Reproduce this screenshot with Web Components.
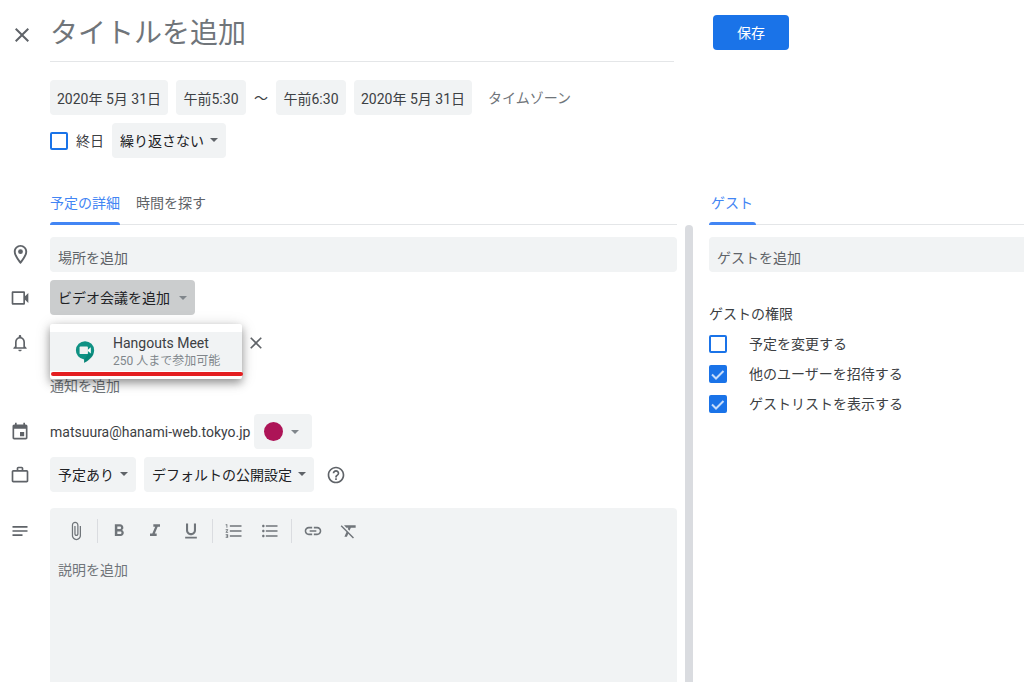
<!DOCTYPE html>
<html lang="ja">
<head>
<meta charset="utf-8">
<meta name="viewport" content="width=device-width, initial-scale=1">
<title>予定を作成</title>
<style>
  html, body { margin: 0; }
  body {
    background: #fff;
    color: #3c4043;
    font: 14px/20px Roboto, "Noto Sans CJK JP", sans-serif;
    --field: #f1f3f4;
    --line: #e4e6e8;
    --muted: #5f6368;
    --blue: #1a73e8;
    --control: 35px;
  }
</style>
</head>
<body>
<event-editor></event-editor>
<script>
const ICONS = {
  close: '<path d="M19 6.41 17.59 5 12 10.59 6.41 5 5 6.41 10.59 12 5 17.59 6.41 19 12 13.41 17.59 19 19 17.59 13.41 12z"/>',
  place: '<path d="M12 2C8.13 2 5 5.13 5 9c0 5.25 7 13 7 13s7-7.75 7-13c0-3.87-3.13-7-7-7zM7 9c0-2.76 2.24-5 5-5s5 2.24 5 5c0 2.88-2.88 7.19-5 9.88C9.92 16.21 7 11.85 7 9z"/><circle cx="12" cy="9" r="2.5"/>',
  video: '<path fill-rule="evenodd" d="M3.5 4h13c.83 0 1.500.67 1.500 1.500V10l4-4v12l-4-4v4.500c0 .83-.67 1.500-1.500 1.500h-13C2.670 20 2 19.330 2 18.500v-13C2 4.670 2.670 4 3.500 4zM4 6v12h12V6z"/>',
  bell: '<path d="M12 22c1.100 0 2-.9 2-2h-4c0 1.100.9 2 2 2zm6-6v-5c0-3.070-1.630-5.640-4.500-6.320V4c0-.83-.67-1.500-1.500-1.500s-1.500.67-1.500 1.500v.68C7.640 5.360 6 7.920 6 11v5l-2 2v1h16v-1l-2-2zm-2 1H8v-6c0-2.480 1.510-4.500 4-4.500s4 2.020 4 4.500v6z"/>',
  event: '<path d="M17 12h-5v5h5v-5zM16 1v2H8V1H6v2H5c-1.110 0-1.990.9-1.990 2L3 19c0 1.100.89 2 2 2h14c1.100 0 2-.9 2-2V5c0-1.100-.9-2-2-2h-1V1h-2zm3 18H5V8h14v11z"/>',
  work: '<path fill-rule="evenodd" d="M14 6V4h-4v2h4zM4 8v11h16V8H4zm16-2c1.110 0 2 .89 2 2v11c0 1.110-.89 2-2 2H4c-1.110 0-2-.89-2-2l.01-11c0-1.110.88-2 1.990-2h4V4c0-1.110.89-2 2-2h4c1.110 0 2 .89 2 2v2h4z"/>',
  notes: '<path d="M3 18h12v-2H3v2zM3 6v2h18V6H3zm0 7h18v-2H3v2z"/>',
  help: '<path d="M11 18h2v-2h-2v2zm1-16C6.480 2 2 6.480 2 12s4.480 10 10 10 10-4.480 10-10S17.520 2 12 2zm0 18c-4.410 0-8-3.590-8-8s3.590-8 8-8 8 3.590 8 8-3.590 8-8 8zm0-14c-2.210 0-4 1.790-4 4h2c0-1.100.9-2 2-2s2 .9 2 2c0 2-3 1.750-3 5h2c0-2.250 3-2.500 3-5 0-2.210-1.790-4-4-4z"/>',
  attach: '<path d="M16.500 6v11.500c0 2.210-1.790 4-4 4s-4-1.790-4-4V5c0-1.380 1.120-2.500 2.500-2.500s2.500 1.120 2.500 2.500v10.500c0 .55-.45 1-1 1s-1-.45-1-1V6H10v9.500c0 1.380 1.120 2.500 2.500 2.500s2.500-1.120 2.500-2.500V5c0-2.210-1.790-4-4-4S7 2.790 7 5v12.500c0 3.040 2.460 5.500 5.500 5.500s5.500-2.460 5.500-5.500V6h-1.500z"/>',
  bold: '<path d="M15.600 10.790c.97-.67 1.650-1.770 1.650-2.790 0-2.260-1.750-4-4-4H7v14h7.040c2.090 0 3.710-1.700 3.710-3.790 0-1.520-.86-2.820-2.150-3.420zM10 6.500h3c.83 0 1.500.67 1.500 1.500s-.67 1.500-1.500 1.500h-3v-3zm3.500 9H10v-3h3.500c.83 0 1.500.67 1.500 1.500s-.67 1.500-1.500 1.500z"/>',
  italic: '<path d="M10 4v3h2.210l-3.420 8H6v3h8v-3h-2.210l3.420-8H18V4z"/>',
  underline: '<path d="M12 17c3.310 0 6-2.690 6-6V3h-2.500v8c0 1.930-1.570 3.500-3.500 3.500S8.500 12.930 8.500 11V3H6v8c0 3.310 2.690 6 6 6zm-7 2v2h14v-2H5z"/>',
  numbered: '<path d="M2 17h2v.5H3v1h1v.5H2v1h3v-4H2v1zm1-9h1V4H2v1h1v3zm-1 3h1.800L2 13.100v.9h3v-1H3.200L5 10.900V10H2v1zm5-6v2h14V5H7zm0 14h14v-2H7v2zm0-6h14v-2H7v2z"/>',
  bulleted: '<path d="M4 10.500c-.83 0-1.500.67-1.500 1.500s.67 1.500 1.500 1.500 1.500-.67 1.500-1.500-.67-1.500-1.500-1.500zm0-6c-.83 0-1.500.67-1.500 1.500S3.170 7.500 4 7.500 5.500 6.830 5.500 6 4.830 4.500 4 4.500zm0 12c-.83 0-1.500.68-1.500 1.500s.68 1.500 1.500 1.500 1.500-.68 1.500-1.500-.67-1.500-1.500-1.500zM7 19h14v-2H7v2zm0-6h14v-2H7v2zm0-8v2h14V5H7z"/>',
  link: '<path d="M3.900 12c0-1.710 1.390-3.100 3.100-3.100h4V7H7c-2.760 0-5 2.240-5 5s2.240 5 5 5h4v-1.900H7c-1.710 0-3.100-1.390-3.100-3.100zM8 13h8v-2H8v2zm9-6h-4v1.900h4c1.710 0 3.100 1.390 3.100 3.100s-1.390 3.100-3.100 3.100h-4V17h4c2.760 0 5-2.240 5-5s-2.240-5-5-5z"/>',
  clear: '<path d="M3.270 5 2 6.270l6.970 6.970L6.500 19h3l1.570-3.660L16.730 21 18 19.730 3.550 5.270 3.270 5zM6 5v.18L8.820 8h2.400l-.72 1.680 2.100 2.100L14.210 8H20V5H6z"/>',
  meet: '<g transform="translate(0 -1)"><path fill="#0f9183" d="M12 0a11 11 0 0 0-1 21.950V26c6-3 12-8.500 12-15A11 11 0 0 0 12 0z"/><path fill="#00796b" d="M16 15h6.300C20.500 20 16 23.500 11 26v-4z" opacity=".5"/><rect x="5.500" y="6.500" width="10" height="9" rx="1" fill="#f1f1f1"/><path fill="#fff" d="m15.500 10.200 3.500-3v7.600l-3.500-3z"/></g>',
};

function define(name, html, setup) {
  const template = document.createElement('template');
  template.innerHTML = html;
  customElements.define(name, class extends HTMLElement {
    constructor() {
      super();
      this.attachShadow({ mode: 'open' }).append(template.content.cloneNode(true));
    }
    connectedCallback() { if (setup) setup(this, this.shadowRoot); }
  });
}

/* Square glyph; the size attribute is its side in pixels. */
define('app-icon', `
  <style>
    :host { display: block; flex: none; color: var(--muted); }
    svg { display: block; fill: currentColor; overflow: visible; }
  </style>
  <svg viewBox="0 0 24 24" aria-hidden="true"></svg>`,
  (host, root) => {
    const svg = root.querySelector('svg');
    const size = host.getAttribute('size') || '20';
    svg.setAttribute('width', size);
    svg.setAttribute('height', size);
    svg.innerHTML = ICONS[host.getAttribute('name')];
  });

define('drop-arrow', `
  <style>
    :host { display: block; flex: none; width: 8px; height: 4px; color: var(--muted); }
    svg { display: block; fill: currentColor; }
  </style>
  <svg width="8" height="4" viewBox="0 0 8 4" aria-hidden="true"><path d="M0 0h8L4 4z"/></svg>`);

define('icon-button', `
  <style>
    :host { display: block; flex: none; }
    button { display: flex; align-items: center; justify-content: center; width: 100%; height: 100%; margin: 0; padding: 0; border: 0; background: none; cursor: pointer; }
  </style>
  <button type="button"><app-icon></app-icon></button>`,
  (host, root) => {
    const icon = root.querySelector('app-icon');
    icon.setAttribute('name', host.getAttribute('icon'));
    icon.setAttribute('size', host.getAttribute('size') || '20');
    icon.connectedCallback();
    root.querySelector('button').setAttribute('aria-label', host.getAttribute('label'));
  });

define('pill-select', `
  <style>
    :host { display: block; position: relative; flex: none; }
    select { display: block; appearance: none; height: var(--control); margin: 0; padding: 0 22px 0 8px; border: 0; border-radius: 4px; background: var(--field); color: #202124; font: inherit; }
    drop-arrow { position: absolute; right: 8px; top: 15px; pointer-events: none; }
  </style>
  <select><option></option></select><drop-arrow></drop-arrow>`,
  (host, root) => {
    root.querySelector('select').setAttribute('aria-label', host.getAttribute('label'));
    root.querySelector('option').textContent = host.getAttribute('value');
  });

define('filled-field', `
  <style>
    :host { display: block; flex: 1; min-width: 0; }
    input { display: block; box-sizing: border-box; width: 100%; height: var(--control); margin: 0; padding: 6px 8px 0; border: 0; border-radius: var(--field-radius, 4px); background: var(--field); color: #3c4043; font: inherit; }
    input::placeholder { color: var(--muted); opacity: 1; }
  </style>
  <input type="text">`,
  (host, root) => {
    const input = root.querySelector('input');
    input.placeholder = host.getAttribute('prompt');
    input.setAttribute('aria-label', input.placeholder);
  });

define('date-field', `
  <style>
    :host { display: block; flex: none; width: 118px; }
    :host([kind="time"]) { width: 70px; }
    input { display: block; box-sizing: border-box; width: 100%; height: var(--control); margin: 0; padding: 0; border: 0; border-radius: 4px; background: var(--field); color: #3c4043; font: inherit; text-align: center; }
  </style>
  <input type="text">`,
  (host, root) => {
    const input = root.querySelector('input');
    input.value = host.getAttribute('value');
    input.setAttribute('aria-label', host.getAttribute('label'));
  });

define('check-option', `
  <style>
    :host { display: block; flex: none; }
    label { display: flex; align-items: center; gap: var(--check-gap, 8px); cursor: pointer; }
    .box { display: grid; flex: none; }
    input { grid-area: 1 / 1; appearance: none; box-sizing: border-box; width: 18px; height: 18px; margin: 0; border: 2px solid var(--blue); border-radius: 2px; background: #fff; }
    input:checked { background: var(--blue); }
    svg { grid-area: 1 / 1; display: none; width: 18px; height: 18px; fill: none; stroke: #c6dcfa; stroke-width: 2; pointer-events: none; }
    input:checked + svg { display: block; }
  </style>
  <label><span class="box"><input type="checkbox"><svg viewBox="0 0 18 18" aria-hidden="true"><path d="m3 9.500 4 4L14.500 6"/></svg></span><span><slot></slot></span></label>`,
  (host, root) => { root.querySelector('input').checked = host.hasAttribute('checked'); });

define('tab-bar', `
  <style>
    :host { display: flex; gap: 16px; height: 45px; box-shadow: inset 0 -1px var(--line); }
  </style>
  <slot></slot>`,
  host => host.setAttribute('role', 'tablist'));

define('tab-item', `
  <style>
    :host { display: block; }
    button { display: block; position: relative; height: 100%; margin: 0; padding: 0; border: 0; background: none; color: var(--muted); font: inherit; cursor: pointer; }
    :host([selected]) button { color: #4285f4; }
    :host([selected]) button::after { content: ""; position: absolute; left: 0; right: 0; bottom: 0; height: 3px; border-radius: 3px 3px 0 0; background: #4285f4; }
    :host([wide]) button { padding: 0 3px 0 2px; }
  </style>
  <button type="button" role="tab"><slot></slot></button>`,
  (host, root) => root.querySelector('button').setAttribute('aria-selected', host.hasAttribute('selected')));

/* One line of the form: a leading glyph in the margin, then its controls. */
define('event-row', `
  <style>
    :host { display: flex; position: relative; }
    .lead { display: flex; flex: none; align-items: center; justify-content: center; width: 40px; height: var(--lead-height, var(--control)); margin-right: 10px; }
    .body { display: flex; flex: 1; align-items: center; gap: var(--row-gap, 8px); min-width: 0; min-height: var(--control); }
  </style>
  <div class="lead"><app-icon></app-icon></div>
  <div class="body"><slot></slot></div>`,
  (host, root) => {
    const icon = root.querySelector('app-icon');
    icon.setAttribute('name', host.getAttribute('icon'));
    icon.setAttribute('size', host.getAttribute('size') || '20');
    icon.connectedCallback();
  });

define('conference-picker', `
  <style>
    :host { display: block; position: relative; }
    .trigger { display: flex; align-items: center; gap: 9px; height: var(--control); margin: 0; padding: 0 8px; border: 0; border-radius: 4px; background: #cbcdce; color: #202124; font: inherit; cursor: pointer; }
    .trigger drop-arrow { color: #80868b; }
    .menu { position: absolute; z-index: 2; top: 44px; left: 0; width: 192px; padding: 8px 0; background: #fff; border-radius: 2px; box-shadow: 0 4px 8px rgba(0,0,0,.35), 0 2px 16px rgba(0,0,0,.15); }
    .item { display: flex; align-items: center; gap: 18px; width: 100%; height: 39px; margin: 0; padding: 0 0 0 25px; border: 0; background: var(--field); color: #3c4043; font: inherit; text-align: left; cursor: pointer; }
    .name, .note { display: block; line-height: 18px; white-space: nowrap; }
    .note { color: #80868b; font-size: 12px; }
    .mark { position: absolute; left: 1px; right: -1px; bottom: 3px; height: 4px; border-radius: 2px; background: #e41e20; }
  </style>
  <button class="trigger" type="button" aria-haspopup="menu" aria-expanded="true">ビデオ会議を追加<drop-arrow></drop-arrow></button>
  <div class="menu" role="menu">
    <button class="item" type="button" role="menuitem">
      <app-icon name="meet" size="20"></app-icon>
      <span><span class="name">Hangouts Meet</span><span class="note">250 人まで参加可能</span></span>
    </button>
    <div class="mark"></div>
  </div>`);

define('color-picker', `
  <style>
    :host { display: block; flex: none; }
    button { display: flex; align-items: center; gap: 8px; width: 58px; height: var(--control); margin: 0; padding: 0 10px; border: 0; border-radius: 4px; background: var(--field); cursor: pointer; }
    .dot { width: 19px; height: 19px; border-radius: 50%; background: #ad1457; flex: none; }
    drop-arrow { color: #80868b; }
  </style>
  <button type="button" aria-label="予定の色"><span class="dot"></span><drop-arrow></drop-arrow></button>`);

define('rich-editor', `
  <style>
    :host { display: flex; flex: 1; flex-direction: column; min-width: 0; align-self: stretch; background: var(--field); border-radius: 4px 4px 0 0; }
    .tools { display: flex; align-items: center; height: 46px; padding-left: 8px; }
    icon-button { width: 36px; height: 36px; --muted: #70757a; }
    .sep { width: 1px; height: 24px; margin: 0 3px; background: #dadce0; }
    textarea { display: block; flex: 1; box-sizing: border-box; width: 100%; min-height: 120px; margin: 0; padding: 6px 8px; border: 0; background: none; color: #3c4043; font: inherit; resize: none; }
    textarea::placeholder { color: #70757a; opacity: 1; }
  </style>
  <div class="tools" role="toolbar" aria-label="書式">
    <icon-button icon="attach" label="添付"></icon-button><span class="sep"></span>
    <icon-button icon="bold" label="太字"></icon-button>
    <icon-button icon="italic" label="斜体"></icon-button>
    <icon-button icon="underline" label="下線"></icon-button><span class="sep"></span>
    <icon-button icon="numbered" label="番号付きリスト"></icon-button>
    <icon-button icon="bulleted" label="箇条書き"></icon-button><span class="sep"></span>
    <icon-button icon="link" label="リンク"></icon-button>
    <icon-button icon="clear" label="書式をクリア"></icon-button>
  </div>
  <textarea placeholder="説明を追加" aria-label="説明を追加"></textarea>`);

define('event-header', `
  <style>
    :host { display: block; }
    .title { display: flex; align-items: center; padding: 4px 19px 0 0; }
    .title icon-button { width: 24px; height: 24px; margin: 4px 16px 0 10px; }
    .title input { flex: 1; min-width: 0; box-sizing: border-box; height: 58px; margin: 0; padding: 2px 0 0; border: 0; border-bottom: 1px solid var(--line); background: none; color: #3c4043; font: inherit; font-size: 28px; }
    .title input::placeholder { color: #70757a; opacity: 1; }
    .when { display: flex; flex-direction: column; gap: 8px; padding: 18px 0 0 50px; }
    .line { display: flex; align-items: center; gap: 8px; }
    a { margin-left: 8px; color: #70757a; text-decoration: none; }
  </style>
  <div class="title">
    <icon-button icon="close" size="24" label="閉じる"></icon-button>
    <input type="text" placeholder="タイトルを追加" aria-label="タイトルを追加">
  </div>
  <div class="when">
    <div class="line">
      <date-field value="2020年 5月 31日" label="開始日"></date-field>
      <date-field kind="time" value="午前5:30" label="開始時間"></date-field>
      <span>～</span>
      <date-field kind="time" value="午前6:30" label="終了時間"></date-field>
      <date-field value="2020年 5月 31日" label="終了日"></date-field>
      <a href="#timezone">タイムゾーン</a>
    </div>
    <div class="line">
      <check-option>終日</check-option>
      <pill-select label="繰り返し" value="繰り返さない"></pill-select>
    </div>
  </div>`);

define('event-details', `
  <style>
    :host { display: flex; flex: 1; flex-direction: column; }
    tab-bar { margin: 22px 16px 0 50px; }
    .scroller { display: flex; flex: 1; gap: 8px; }
    .form { display: flex; flex: 1; flex-direction: column; gap: 8px; min-width: 0; padding-top: 12px; }
    .bar { flex: none; width: 8px; border-radius: 4px 4px 0 0; background: #dadce0; }
    .notify { display: flex; flex-direction: column; gap: 16px; padding: 2px 0 10px; }
    .notify icon-button { width: 28px; height: 28px; margin-left: 192px; }
    .notify a { margin-left: 50px; color: #70757a; text-decoration: none; }
    .calendar { --row-gap: 4px; }
    .help { width: 28px; height: 28px; }
    .description { flex: 1; margin-top: 8px; --lead-height: 46px; }
  </style>
  <tab-bar><tab-item selected>予定の詳細</tab-item><tab-item>時間を探す</tab-item></tab-bar>
  <div class="scroller">
    <div class="form">
      <event-row icon="place" size="23"><filled-field prompt="場所を追加"></filled-field></event-row>
      <event-row icon="video"><conference-picker></conference-picker></event-row>
      <div class="notify">
        <event-row icon="bell"><icon-button icon="close" label="通知を削除"></icon-button></event-row>
        <a href="#notification">通知を追加</a>
      </div>
      <event-row class="calendar" icon="event"><span>matsuura@hanami-web.tokyo.jp</span><color-picker></color-picker></event-row>
      <event-row icon="work">
        <pill-select label="空き状況" value="予定あり"></pill-select>
        <pill-select label="公開設定" value="デフォルトの公開設定"></pill-select>
        <icon-button class="help" icon="help" label="ヘルプ"></icon-button>
      </event-row>
      <event-row class="description" icon="notes"><rich-editor></rich-editor></event-row>
    </div>
    <div class="bar"></div>
  </div>`);

define('guest-panel', `
  <style>
    :host { display: flex; flex-direction: column; padding-left: 16px; }
    .top { height: 180px; box-sizing: border-box; padding: 15px 0 0 4px; }
    .save { width: 76px; height: var(--control); margin: 0; padding: 0; border: 0; border-radius: 4px; background: var(--blue); color: #fff; font: inherit; cursor: pointer; }
    .field { display: flex; margin-top: 12px; --field-radius: 4px 0 0 4px; }
    fieldset { margin: 32px 0 0; padding: 0; border: 0; --check-gap: 22px; }
    legend { padding: 0; margin-bottom: 10px; }
    .options { display: flex; flex-direction: column; gap: 10px; }
  </style>
  <div class="top"><button class="save" type="button">保存</button></div>
  <tab-bar><tab-item selected wide>ゲスト</tab-item></tab-bar>
  <div class="field"><filled-field prompt="ゲストを追加"></filled-field></div>
  <fieldset>
    <legend>ゲストの権限</legend>
    <div class="options">
      <check-option>予定を変更する</check-option>
      <check-option checked>他のユーザーを招待する</check-option>
      <check-option checked>ゲストリストを表示する</check-option>
    </div>
  </fieldset>`);

define('event-editor', `
  <style>
    :host { display: grid; grid-template-columns: minmax(0, 1fr) 331px; min-height: 100vh; }
    main { display: flex; flex-direction: column; min-width: 0; }
  </style>
  <main><event-header></event-header><event-details></event-details></main>
  <guest-panel></guest-panel>`);
</script>
</body>
</html>
